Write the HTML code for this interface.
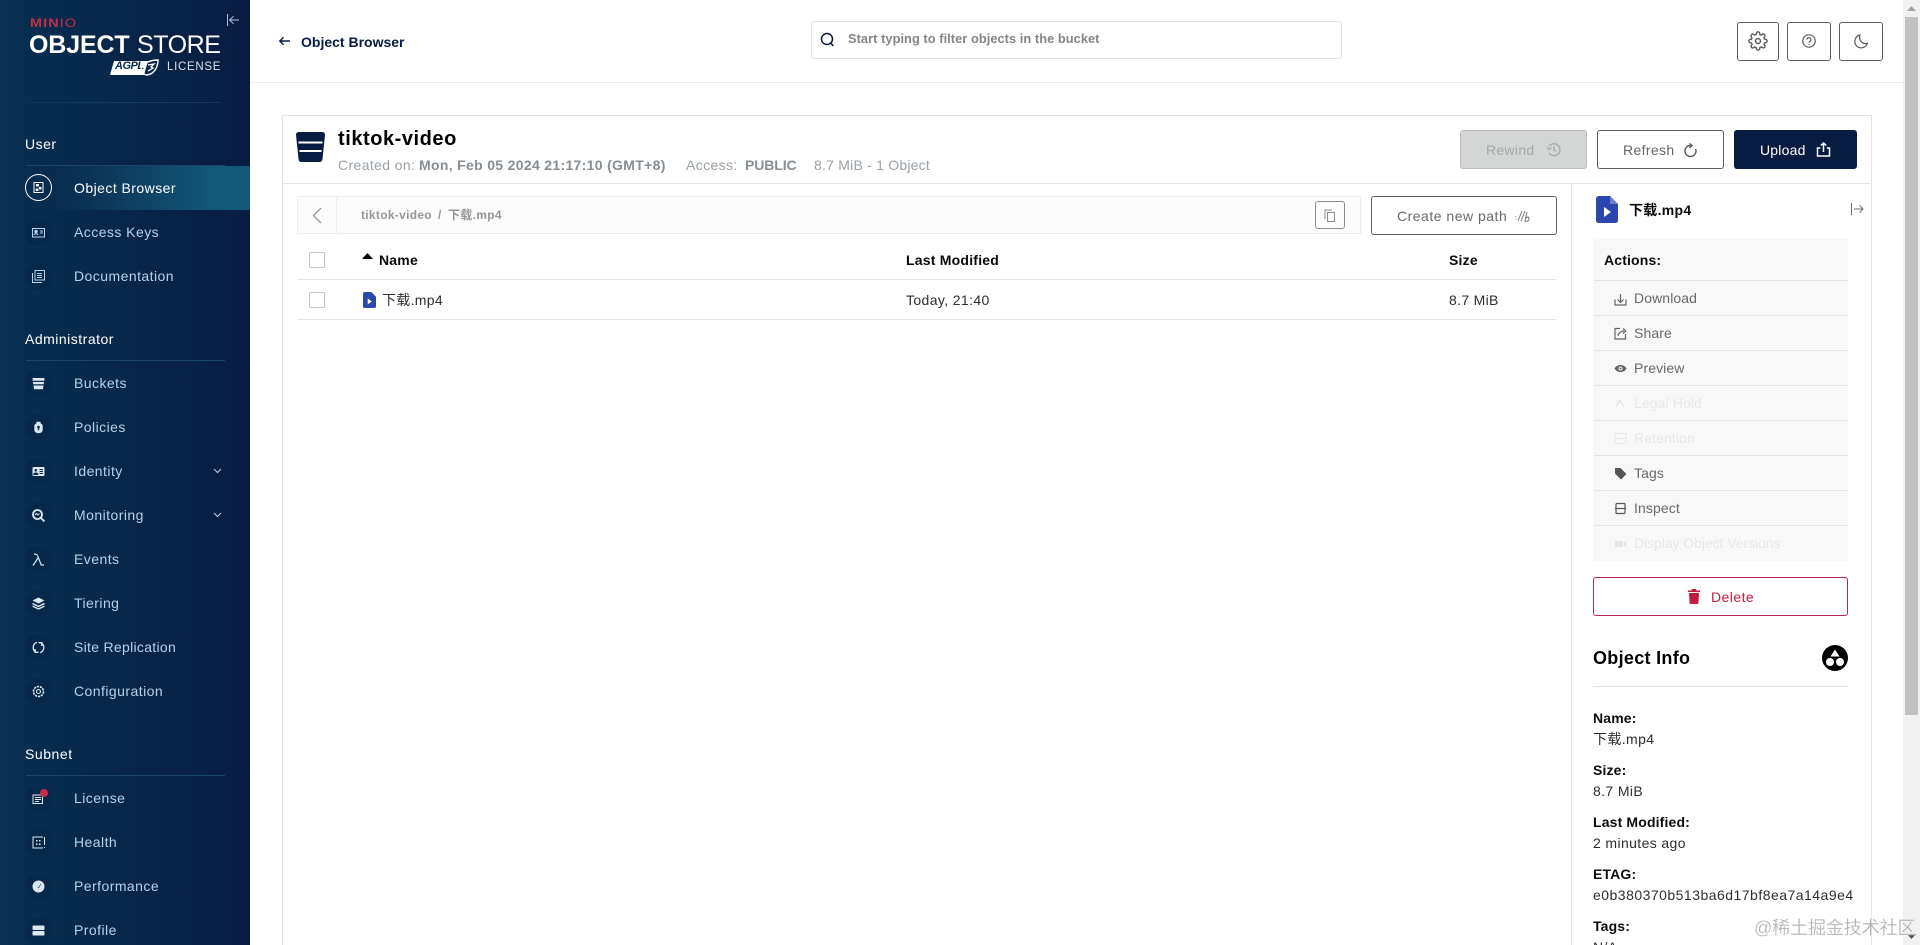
<!DOCTYPE html>
<html lang="zh"><head><meta charset="utf-8"><title>MinIO Object Store</title>
<style>
html,body{margin:0;padding:0;width:1920px;height:945px;overflow:hidden;background:#fff;font-family:"Liberation Sans","Noto Sans CJK SC",sans-serif;font-size:14px;color:#000}
#root{position:relative;width:1920px;height:945px;overflow:hidden;contain:strict}
.a{position:absolute}
.t{position:absolute;white-space:nowrap;line-height:20px;margin-top:-10px}
.side{left:0;top:0;width:250px;height:945px;background:linear-gradient(90deg,#073052 0%,#081c42 100%);overflow:hidden}
.nav{color:#b3d3ec;letter-spacing:.45px;left:74px;font-size:14px}
.h{color:#fff;left:25px;font-size:14px;letter-spacing:.5px}
.ln{left:26px;width:199px;height:1px;background:#1c4668}
.ic{position:absolute;left:25px;width:27px;height:27px;border-radius:50%;background:rgba(6,22,56,.18);margin-top:-13.5px}
.ic svg{position:absolute;left:7px;top:7px;width:13px;height:13px}
.btn{position:absolute;box-sizing:border-box;border:1px solid #5e5e5e;border-radius:3px;background:#fff}
.act{left:1634px;color:#696969;font-size:14px;letter-spacing:.1px}
.off{color:#e6e6e6}
.sep{left:1594px;width:254px;height:1px;background:#e4e4e4}
.ai{position:absolute;left:1614px;width:13px;height:13px;margin-top:-6.5px}
.lab{left:1593px;font-weight:700;color:#0c0c0c;font-size:14px;letter-spacing:.15px}
.val{left:1593px;color:#2e2e2e;font-size:14px;letter-spacing:.38px}
</style></head><body><div id="root">

<!-- SIDEBAR -->
<div class="a side">
  <div class="t" style="left:30px;top:24px;font-size:11.5px;font-weight:700;color:#c72c48;letter-spacing:.9px;line-height:12px;margin-top:-6px;transform:scaleX(1.25);transform-origin:left">MIN<span style="font-weight:400">IO</span></div>
  <div class="t" style="left:29px;top:45px;font-size:25px;font-weight:700;color:#fff;letter-spacing:-.15px">OBJECT</div>
  <div class="t" style="left:137px;top:45px;font-size:25px;color:#fff;letter-spacing:-.45px">STORE</div>
  <div class="a" style="left:112px;top:61px;width:34px;height:14px;background:#fff;transform:skewX(-16deg)"></div>
  <div class="t" style="left:115px;top:66px;font-size:11px;font-style:italic;font-weight:700;color:#0a2a4d;line-height:12px;margin-top:-6px;letter-spacing:-.5px">AGPL</div>
  <svg class="a" style="left:140px;top:59px" width="19" height="17" viewBox="0 0 19 17"><path d="M1 9C5 3 12 1 18 1c0 6-3 14-11 15C4 16 2 13 1 9z" fill="none" stroke="#fff" stroke-width="1.400"/><path d="M8 6l6-1-3 3 2 1-5 3" fill="none" stroke="#fff" stroke-width="1.300"/></svg>
  <div class="t" style="left:167px;top:67px;font-size:11.5px;color:#d8e2ec;letter-spacing:.7px">LICENSE</div>
  <svg class="a" style="left:226px;top:13px" width="14" height="14" viewBox="0 0 14 14" fill="none" stroke="#b3c4d6" stroke-width="1"><path d="M1.500 1v12M13 7H4M7.500 3.200L3.600 7l3.900 3.800"/></svg>
  <div class="a ln" style="left:30px;width:190px;top:102px;background:#14395c"></div>

  <div class="t h" style="top:144px">User</div>
  <div class="a ln" style="top:165px"></div>
  <div class="a" style="left:0;top:166px;width:250px;height:44px;background:linear-gradient(90deg,rgba(20,88,122,0) 20%,#14587a 85%)"></div>
  <div class="a" style="left:25px;top:174px;width:25px;height:25px;border:1px solid #fff;border-radius:50%"></div>
  <svg class="a" style="left:33px;top:182px" width="11" height="11" viewBox="0 0 11 11"><path d="M1 .5h9v10H1z" fill="none" stroke="#fff"/><rect x="3" y="2" width="3" height="2.500" fill="#fff"/><rect x="6" y="5" width="2.500" height="2.500" fill="#fff"/><rect x="2.700" y="6.500" width="2.800" height="2.500" fill="#fff"/></svg>
  <div class="t nav" style="top:188px;color:#fff">Object Browser</div>

  <div class="ic" style="top:232px"><svg viewBox="0 0 13 13" fill="none" stroke="#b3d3ec"><rect x=".5" y="2.500" width="12" height="8.500"/><circle cx="4" cy="5.500" r="1.200" fill="#b3d3ec"/><path d="M2 9c.5-1.600 3.500-1.600 4 0M8 5h3M8 7h3"/></svg></div>
  <div class="t nav" style="top:232px">Access Keys</div>
  <div class="ic" style="top:276px"><svg viewBox="0 0 13 13" fill="none" stroke="#b3d3ec"><path d="M3 .5h9.500v9.500H3zM.5 3v9.500H10M5 3.500h5M5 5.500h5M5 7.500h5"/></svg></div>
  <div class="t nav" style="top:276px">Documentation</div>

  <div class="t h" style="top:339px;letter-spacing:.5px">Administrator</div>
  <div class="a ln" style="top:360px"></div>
  <div class="ic" style="top:383px"><svg viewBox="0 0 13 13" fill="#dbe8f3"><path d="M.5 1h12l-.3 2.800H.8zM1 5h11l-.2 2.300H1.200zM1.500 8.500h10l-.5 3.800H2z"/></svg></div>
  <div class="t nav" style="top:383px">Buckets</div>
  <div class="ic" style="top:427px"><svg viewBox="0 0 13 13"><path d="M4.500 2.200V.8h4v1.400c1.500.7 2.200 1.600 2.200 3v3.600c0 2-1.600 3.400-4.200 3.400s-4.200-1.400-4.200-3.400V5.200c0-1.400.7-2.300 2.200-3z" fill="#dbe8f3"/><circle cx="6.500" cy="6" r="1.300" fill="#0a2850"/><rect x="5.800" y="6.500" width="1.400" height="2.700" fill="#0a2850"/></svg></div>
  <div class="t nav" style="top:427px">Policies</div>
  <div class="ic" style="top:471px"><svg viewBox="0 0 13 13"><rect x=".5" y="2" width="12" height="9" rx="1" fill="#dbe8f3"/><circle cx="3.800" cy="5.300" r="1.300" fill="#0a2850"/><path d="M1.800 9.500c.3-2 3.700-2 4 0zM7.500 4.500h3.500M7.500 6.500h3.500M7.500 8.500h3.500" fill="#0a2850" stroke="#0a2850"/></svg></div>
  <div class="t nav" style="top:471px">Identity</div>
  <svg class="a" style="left:213px;top:468px" width="9" height="6" viewBox="0 0 9 6" fill="none" stroke="#b3d3ec"><path d="M1 1l3.500 3.500L8 1"/></svg>
  <div class="ic" style="top:515px"><svg viewBox="0 0 13 13" fill="none" stroke="#dbe8f3" stroke-width="1.800"><circle cx="5.500" cy="5.500" r="4.500"/><path d="M9 9l3.500 3.500"/><path d="M3 6l1.500-1.500 1.500 1.500 1.500-1.500" stroke-width="1"/></svg></div>
  <div class="t nav" style="top:515px">Monitoring</div>
  <svg class="a" style="left:213px;top:512px" width="9" height="6" viewBox="0 0 9 6" fill="none" stroke="#b3d3ec"><path d="M1 1l3.500 3.500L8 1"/></svg>
  <div class="ic" style="top:559px"><svg viewBox="0 0 13 13" fill="none" stroke="#dbe8f3" stroke-width="1.200"><path d="M2 1c3 0 3.500 1 4.500 4l2.700 7h2.800M6 5l-5 7.500"/></svg></div>
  <div class="t nav" style="top:559px">Events</div>
  <div class="ic" style="top:603px"><svg viewBox="0 0 13 13" fill="#dbe8f3"><path d="M6.500.5l6 3-6 3-6-3z"/><path d="M.8 5.800l5.700 2.800 5.700-2.800.5 1.400-6.200 3-6.200-3z"/><path d="M.8 8.500l5.700 2.800 5.700-2.800.5 1.300-6.200 3-6.200-3z"/></svg></div>
  <div class="t nav" style="top:603px">Tiering</div>
  <div class="ic" style="top:647px"><svg viewBox="0 0 13 13" fill="none" stroke="#dbe8f3" stroke-width="1.300"><path d="M5 1.300A5.500 5.500 0 0 0 3.500 11M8 11.700A5.500 5.500 0 0 0 9.500 2M3.200 8v3.300h3.300M9.800 5V1.700H6.500"/></svg></div>
  <div class="t nav" style="top:647px;letter-spacing:.3px">Site Replication</div>
  <div class="ic" style="top:691px"><svg viewBox="0 0 13 13" fill="none" stroke="#dbe8f3" stroke-width="1.100"><circle cx="6.500" cy="6.500" r="2"/><circle cx="6.500" cy="6.500" r="5" stroke-dasharray="2.200 .9" stroke-width="1.600"/></svg></div>
  <div class="t nav" style="top:691px">Configuration</div>

  <div class="t h" style="top:754px;letter-spacing:.55px">Subnet</div>
  <div class="a ln" style="top:775px"></div>
  <div class="ic" style="top:798px"><svg viewBox="0 0 13 13" fill="none" stroke="#dbe8f3"><path d="M1 3h9.500v8.500H1zM3 5.500h6M3 7.500h6M3 9.500h4"/></svg></div>
  <div class="a" style="left:40px;top:789px;width:8px;height:8px;border-radius:50%;background:#c72c48"></div>
  <div class="t nav" style="top:798px">License</div>
  <div class="ic" style="top:842px"><svg viewBox="0 0 13 13" fill="none" stroke="#dbe8f3"><path d="M11 1H1v11h10M12.500 1v8M12.500 11v1"/><path d="M4 4h1.500v1.500H4zM7 4h1.500v1.500H7zM4 7.500h1.500V9H4zM7 7.500h1.500V9H7z" fill="#dbe8f3" stroke="none"/></svg></div>
  <div class="t nav" style="top:842px">Health</div>
  <div class="ic" style="top:886px"><svg viewBox="0 0 13 13"><circle cx="6.500" cy="6.500" r="6" fill="#dbe8f3"/><path d="M7 7l2-3" fill="none" stroke="#5a7391"/><circle cx="6.500" cy="7.500" r=".9" fill="#5a7391"/></svg></div>
  <div class="t nav" style="top:886px">Performance</div>
  <div class="ic" style="top:930px"><svg viewBox="0 0 13 13" fill="#dbe8f3"><rect x=".5" y="1.500" width="12" height="4.500" rx="1"/><rect x=".5" y="7" width="12" height="4.500" rx="1"/></svg></div>
  <div class="t nav" style="top:930px">Profile</div>
</div>

<!-- HEADER -->
<div class="a" style="left:250px;top:82px;width:1653px;height:1px;background:#eaeaea"></div>
<svg class="a" style="left:278px;top:36px" width="13" height="10" viewBox="0 0 13 10" fill="none" stroke="#081c42" stroke-width="1.400"><path d="M12 5H2M5.500 1.300L1.800 5l3.700 3.700"/></svg>
<div class="t" style="left:301px;top:42px;font-weight:700;color:#081c42;font-size:14px;letter-spacing:0">Object Browser</div>
<div class="a" style="left:811px;top:21px;width:529px;height:36px;border:1px solid #e2e2e2;border-radius:3px"></div>
<svg class="a" style="left:820px;top:32px" width="15" height="16" viewBox="0 0 15 16" fill="none" stroke="#0c1b3a" stroke-width="1.500"><circle cx="7" cy="7" r="5.500"/><path d="M10.800 11l2.500 3"/></svg>
<div class="t" style="left:848px;top:39px;font-weight:700;color:#858585;font-size:12.8px;letter-spacing:.06px">Start typing to filter objects in the bucket</div>

<div class="btn" style="left:1737px;top:22px;width:42px;height:39px"></div>
<svg class="a" style="left:1748px;top:31px" width="20" height="20" viewBox="0 0 24 24" fill="none" stroke="#5a5a5a" stroke-width="1.700"><circle cx="12" cy="12" r="3"/><path d="M19.4 15a1.650 1.650 0 0 0 .33 1.820l.06.06a2 2 0 0 1 0 2.830 2 2 0 0 1-2.830 0l-.06-.06a1.650 1.650 0 0 0-1.820-.33 1.650 1.650 0 0 0-1 1.510V21a2 2 0 0 1-2 2 2 2 0 0 1-2-2v-.09A1.650 1.650 0 0 0 9 19.400a1.650 1.650 0 0 0-1.820.33l-.06.06a2 2 0 0 1-2.830 0 2 2 0 0 1 0-2.830l.06-.06a1.650 1.650 0 0 0 .33-1.820 1.650 1.650 0 0 0-1.510-1H3a2 2 0 0 1-2-2 2 2 0 0 1 2-2h.09A1.650 1.650 0 0 0 4.600 9a1.650 1.650 0 0 0-.33-1.820l-.06-.06a2 2 0 0 1 0-2.830 2 2 0 0 1 2.830 0l.06.06a1.650 1.650 0 0 0 1.820.33H9a1.650 1.650 0 0 0 1-1.510V3a2 2 0 0 1 2-2 2 2 0 0 1 2 2v.09a1.650 1.650 0 0 0 1 1.510 1.650 1.650 0 0 0 1.820-.33l.06-.06a2 2 0 0 1 2.830 0 2 2 0 0 1 0 2.830l-.06.06a1.650 1.650 0 0 0-.33 1.820V9a1.650 1.650 0 0 0 1.510 1H21a2 2 0 0 1 2 2 2 2 0 0 1-2 2h-.09a1.650 1.650 0 0 0-1.510 1z"/></svg>
<div class="btn" style="left:1787px;top:22px;width:44px;height:39px"></div>
<svg class="a" style="left:1802px;top:34px" width="14" height="14" viewBox="0 0 14 14" fill="none" stroke="#5a5a5a" stroke-width="1.200"><circle cx="7" cy="7" r="6.200"/><path d="M5 5.500a2 2 0 1 1 3 1.800c-.7.400-1 .8-1 1.500M7 10v.9"/></svg>
<div class="btn" style="left:1839px;top:22px;width:44px;height:39px"></div>
<svg class="a" style="left:1854px;top:34px" width="14" height="15" viewBox="0 0 14 15" fill="none" stroke="#5a5a5a" stroke-width="1.200"><path d="M6 1a6.500 6.500 0 1 0 7.500 8.200C9 11 4.300 6.500 6 1z"/></svg>

<!-- SCROLLBAR -->
<div class="a" style="left:1903px;top:0;width:17px;height:945px;background:#f1f1f1"></div>
<div class="a" style="left:1905px;top:17px;width:13px;height:698px;background:#c1c1c1"></div>
<svg class="a" style="left:1906px;top:5px" width="11" height="7"><path d="M5.500 1L10 6H1z" fill="#a3a3a3"/></svg>
<svg class="a" style="left:1906px;top:933px" width="11" height="7"><path d="M5.500 6L10 1H1z" fill="#505050"/></svg>

<!-- PANEL -->
<div class="a" style="left:282px;top:115px;width:1588px;height:840px;border:1px solid #e4e4e4"></div>
<div class="a" style="left:282px;top:183px;width:1588px;height:1px;background:#e4e4e4"></div>
<div class="a" style="left:1571px;top:183px;width:1px;height:770px;background:#e4e4e4"></div>

<svg class="a" style="left:296px;top:132px" width="29" height="30" viewBox="0 0 29 30"><path d="M3 0h23q3 0 3 3l-2.500 24q-.3 3-3 3H5.500q-2.700 0-3-3L0 3q0-3 3-3z" fill="#081c42"/><rect x="2.500" y="9.500" width="24" height="2" fill="#fff"/><rect x="3.500" y="18" width="22" height="2" fill="#fff"/></svg>
<div class="t" style="left:338px;top:139px;font-size:20px;font-weight:700;color:#000;letter-spacing:.55px">tiktok-video</div>
<div class="t" style="left:338px;top:165px;color:#9aa1a6;letter-spacing:.38px">Created on:</div>
<div class="t" style="left:419px;top:165px;color:#868d93;font-weight:700;letter-spacing:.32px">Mon, Feb 05 2024 21:17:10 (GMT+8)</div>
<div class="t" style="left:686px;top:165px;color:#9aa1a6;letter-spacing:.38px">Access:</div>
<div class="t" style="left:745px;top:165px;color:#868d93;font-weight:700;letter-spacing:-.1px">PUBLIC</div>
<div class="t" style="left:814px;top:165px;color:#9aa1a6;letter-spacing:.22px">8.7 MiB - 1 Object</div>

<div class="a" style="left:1460px;top:130px;width:127px;height:39px;background:#d3d6d5;border:1px solid #bbb;box-sizing:border-box;border-radius:3px"></div>
<div class="t" style="left:1486px;top:150px;color:#a5a9a9;letter-spacing:.3px">Rewind</div>
<svg class="a" style="left:1546px;top:142px" width="15" height="15" viewBox="0 0 15 15" fill="none" stroke="#a5a9a9" stroke-width="1.300"><path d="M3.300 4a6 6 0 1 1-.3 7M1 5.500l2.200 2 2-2.200M8 4.500V8l2 1.300"/></svg>
<div class="btn" style="left:1597px;top:130px;width:127px;height:39px"></div>
<div class="t" style="left:1623px;top:150px;color:#666;letter-spacing:.35px">Refresh</div>
<svg class="a" style="left:1683px;top:143px" width="14" height="15" viewBox="0 0 14 15" fill="none" stroke="#555" stroke-width="1.400"><path d="M7.500 2.500A5.500 5.500 0 1 0 12.600 6M6.500.5l2.500 2-2.500 2.500"/></svg>
<div class="a" style="left:1734px;top:130px;width:123px;height:39px;background:#081c42;border-radius:3px"></div>
<div class="t" style="left:1760px;top:150px;color:#fff;letter-spacing:.2px">Upload</div>
<svg class="a" style="left:1816px;top:142px" width="15" height="15" viewBox="0 0 15 15" fill="none" stroke="#fff" stroke-width="1.500"><path d="M4.200 6H1.500v8h12V6h-2.700M7.500 10V1M4.800 3.500L7.500 1l2.700 2.500"/></svg>

<!-- Breadcrumb -->
<div class="a" style="left:297px;top:196px;width:1064px;height:38px;background:#fcfcfc;border:1px solid #ededed;box-sizing:border-box"></div>
<div class="a" style="left:336px;top:197px;width:1px;height:36px;background:#ededed"></div>
<svg class="a" style="left:311px;top:207px" width="12" height="17" viewBox="0 0 12 17" fill="none" stroke="#8a8a8a" stroke-width="1.200"><path d="M10 1L2.500 8.500 10 16"/></svg>
<div class="t" style="left:361px;top:215px;color:#969696;font-weight:700;font-size:12px;letter-spacing:.3px">tiktok-video</div>
<div class="t" style="left:438px;top:215px;color:#969696;font-weight:700;font-size:12px">/</div>
<div class="t" style="left:448px;top:215px;color:#969696;font-weight:700;font-size:12px;letter-spacing:.3px">下载.mp4</div>
<div class="a" style="left:1315px;top:201px;width:30px;height:28px;border:1px solid #8c8c8c;border-radius:3px;box-sizing:border-box"></div>
<svg class="a" style="left:1324px;top:209px" width="12" height="13" viewBox="0 0 12 13" fill="none" stroke="#8c8c8c"><path d="M1 10V1h7"/><path d="M3.500 3.500h7v9h-7z"/></svg>
<div class="btn" style="left:1371px;top:196px;width:186px;height:39px"></div>
<div class="t" style="left:1397px;top:216px;color:#696969;letter-spacing:.5px">Create new path</div>
<svg class="a" style="left:1515px;top:209px" width="16" height="14" viewBox="0 0 16 14" fill="none" stroke="#777" stroke-width="1"><path d="M1 7v.8M1 10v.8M7 2L3 12M10 2L6 12M12 3l-2 9c1 .5 4 .5 4-2s-2-2.500-3-1"/></svg>

<!-- Table -->
<div class="a" style="left:309px;top:252px;width:16px;height:16px;border:1px solid #c4c4c4;border-radius:2px;box-sizing:border-box"></div>
<svg class="a" style="left:362px;top:253px" width="11" height="6"><path d="M5.500 0L11 6H0z" fill="#000"/></svg>
<div class="t" style="left:379px;top:260px;font-weight:700;color:#0a0a0a;letter-spacing:.2px">Name</div>
<div class="t" style="left:906px;top:260px;font-weight:700;color:#0a0a0a;letter-spacing:.22px">Last Modified</div>
<div class="t" style="left:1449px;top:260px;font-weight:700;color:#0a0a0a;letter-spacing:.2px">Size</div>
<div class="a" style="left:298px;top:279px;width:1258px;height:1px;background:#e4e4e4"></div>
<div class="a" style="left:309px;top:292px;width:16px;height:16px;border:1px solid #c4c4c4;border-radius:2px;box-sizing:border-box"></div>
<svg class="a" style="left:363px;top:292px" width="13" height="16" viewBox="0 0 22 27"><path d="M3 0h11l8 8v16q0 3-3 3H3q-3 0-3-3V3q0-3 3-3z" fill="#2b46ac"/><path d="M8 11l7 5-7 5z" fill="#fff"/></svg>
<div class="t" style="left:382px;top:300px;color:#2e2e2e;letter-spacing:.3px">下载.mp4</div>
<div class="t" style="left:906px;top:300px;color:#2e2e2e;letter-spacing:.38px">Today, 21:40</div>
<div class="t" style="left:1449px;top:300px;color:#2e2e2e;letter-spacing:.32px">8.7 MiB</div>
<div class="a" style="left:298px;top:319px;width:1258px;height:1px;background:#e4e4e4"></div>

<!-- Details -->
<svg class="a" style="left:1596px;top:196px" width="22" height="27" viewBox="0 0 22 27"><path d="M3 0h11l8 8v16q0 3-3 3H3q-3 0-3-3V3q0-3 3-3z" fill="#2b46ac"/><path d="M14 0l8 8h-8z" fill="#6a7fd0"/><path d="M8 11l7 5-7 5z" fill="#fff"/></svg>
<div class="t" style="left:1629px;top:210px;font-weight:700;color:#0a0a0a;font-size:14px;letter-spacing:.3px">下载.mp4</div>
<svg class="a" style="left:1850px;top:202px" width="14" height="14" viewBox="0 0 14 14" fill="none" stroke="#6c6c6c"><path d="M1.500 1v12M13 7H4M9.500 3.200L13 7l-3.500 3.800"/></svg>

<div class="a" style="left:1593px;top:238px;width:255px;height:323px;background:#f8f8f8"></div>
<div class="t" style="left:1604px;top:260px;font-weight:700;color:#0a0a0a;letter-spacing:.15px">Actions:</div>
<div class="a sep" style="top:280px"></div>
<div class="a sep" style="top:315px"></div>
<div class="a sep" style="top:350px"></div>
<div class="a sep" style="top:385px"></div>
<div class="a sep" style="top:420px"></div>
<div class="a sep" style="top:455px"></div>
<div class="a sep" style="top:490px"></div>
<div class="a sep" style="top:525px"></div>

<svg class="ai" style="top:299px" viewBox="0 0 13 13" fill="none" stroke="#666" stroke-width="1.200"><path d="M1 6.500V12h11V6.500M6.500 1v8M3.500 6.500l3 3 3-3"/></svg>
<div class="t act" style="top:298px">Download</div>
<svg class="ai" style="top:333px" viewBox="0 0 13 13" fill="none" stroke="#666" stroke-width="1.200"><path d="M6 1.500H1V12h10.500V7M4 9c.5-3 3-5 6-5M9 1.500l2.800 2.500L9 6.500"/></svg>
<div class="t act" style="top:333px">Share</div>
<svg class="ai" style="top:368px" viewBox="0 0 13 13"><path d="M.5 6.500C2 4 4 3 6.500 3s4.500 1 6 3.500C11 9 9 10 6.500 10S2 9 .5 6.500z" fill="#666"/><circle cx="6.500" cy="6.500" r="2" fill="#f8f8f8"/><circle cx="6.500" cy="6.500" r="1" fill="#666"/></svg>
<div class="t act" style="top:368px">Preview</div>
<svg class="ai" style="top:404px" viewBox="0 0 13 13" fill="none" stroke="#e6e6e6" stroke-width="1.500"><path d="M2 8l4-5 4 6M3 4l4-2"/></svg>
<div class="t act off" style="top:403px">Legal Hold</div>
<svg class="ai" style="top:438px" viewBox="0 0 13 13" fill="none" stroke="#e6e6e6"><rect x="1" y="1.500" width="11" height="10" rx="1"/><path d="M1 6.500h11"/></svg>
<div class="t act off" style="top:438px">Retention</div>
<svg class="ai" style="top:473px" viewBox="0 0 13 13"><path d="M1 1h5.500L12.500 7 7 12.500 1 6.500z" fill="#555"/></svg>
<div class="t act" style="top:473px">Tags</div>
<svg class="ai" style="top:508px" viewBox="0 0 13 13" fill="none" stroke="#555" stroke-width="1.200"><path d="M1 6.500h11M2 6V2.500q0-1 1-1h7q1 0 1 1V6M2 7v3.500q0 1 1 1h7q1 0 1-1V7"/></svg>
<div class="t act" style="top:508px">Inspect</div>
<svg class="ai" style="top:543px" viewBox="0 0 13 13" fill="#e4e4e4"><path d="M1 4h8v6H1zM10 5l2-1v6l-2-1z"/></svg>
<div class="t act off" style="top:543px;letter-spacing:-.06px">Display Object Versions</div>

<div class="a" style="left:1593px;top:577px;width:255px;height:39px;border:1px solid #b5264e;border-radius:3px;box-sizing:border-box"></div>
<svg class="a" style="left:1688px;top:589px" width="12" height="15" viewBox="0 0 12 15" fill="#c51b3f"><path d="M4 0h4l.6 1.500H12V3H0V1.500h3.400zM1 4h10l-.6 10q0 1-1 1H2.600q-1 0-1-1z"/></svg>
<div class="t" style="left:1711px;top:597px;color:#c51b3f;letter-spacing:.45px">Delete</div>

<div class="t" style="left:1593px;top:658px;font-size:18px;font-weight:700;color:#000;letter-spacing:.3px">Object Info</div>
<svg class="a" style="left:1822px;top:645px" width="26" height="26" viewBox="0 0 26 26"><circle cx="13" cy="13" r="13" fill="#000"/><path d="M13 4.500l4.500 7h-9z" fill="#fff"/><circle cx="8" cy="17" r="4" fill="#fff"/><circle cx="18" cy="17" r="4" fill="#fff"/></svg>
<div class="a" style="left:1593px;top:686px;width:255px;height:1px;background:#e4e4e4"></div>

<div class="t lab" style="top:718px">Name:</div>
<div class="t val" style="top:739px">下载.mp4</div>
<div class="t lab" style="top:770px">Size:</div>
<div class="t val" style="top:791px">8.7 MiB</div>
<div class="t lab" style="top:822px">Last Modified:</div>
<div class="t val" style="top:843px">2 minutes ago</div>
<div class="t lab" style="top:874px">ETAG:</div>
<div class="t val" style="top:895px;letter-spacing:.48px">e0b380370b513ba6d17bf8ea7a14a9e4</div>
<div class="t lab" style="top:926px">Tags:</div>
<div class="t val" style="top:947px">N/A</div>

<div class="t" style="left:1754px;top:928px;font-size:18px;color:#b0b0b0;letter-spacing:-.1px;-webkit-text-stroke:.2px #fff">@稀土掘金技术社区</div>
</div></body></html>
